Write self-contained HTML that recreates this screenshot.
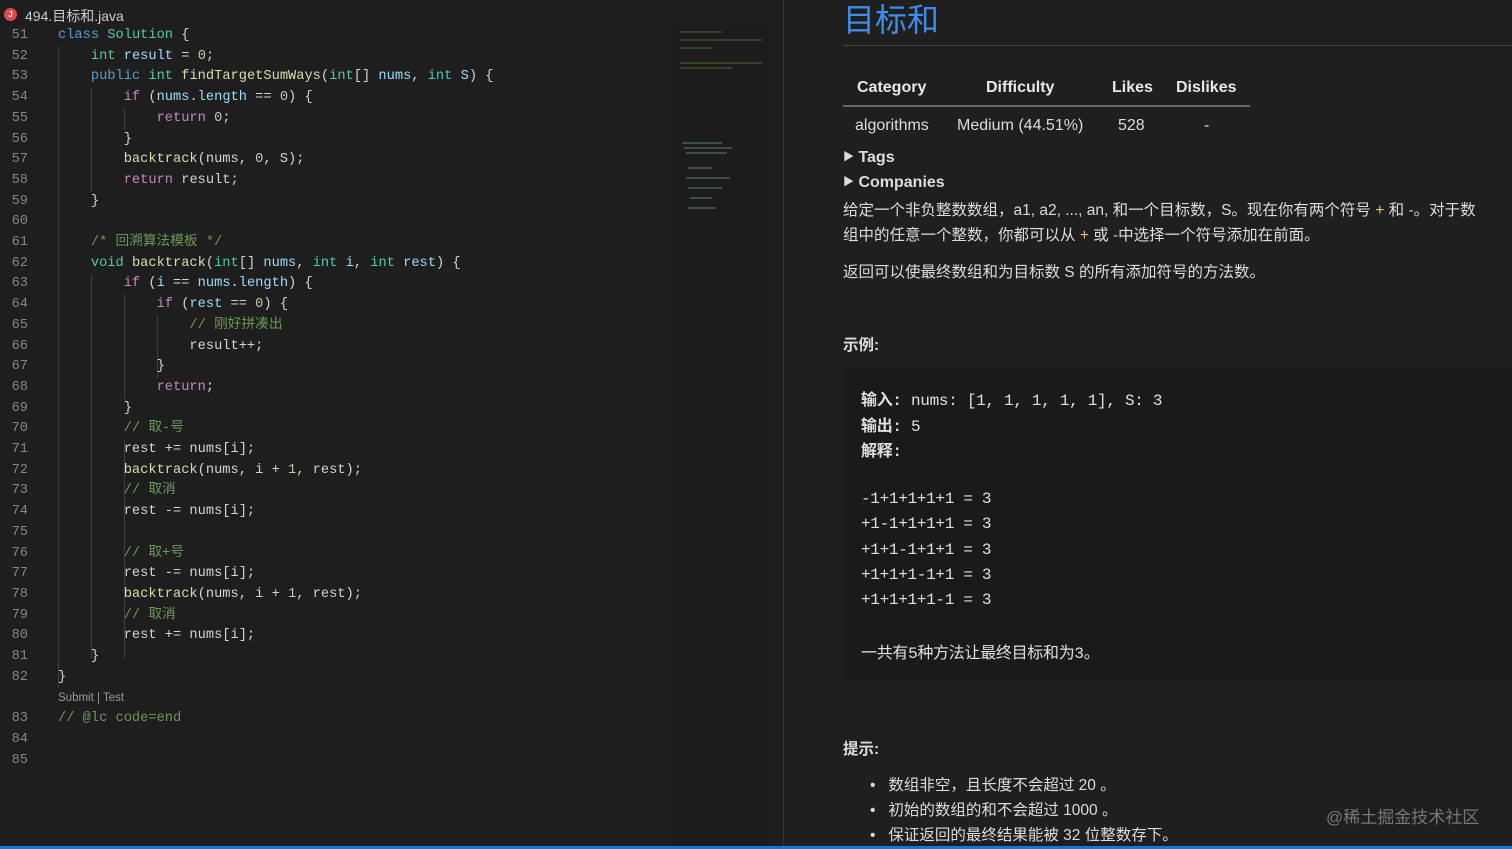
<!DOCTYPE html>
<html><head><meta charset="utf-8"><style>
*{margin:0;padding:0;box-sizing:border-box}
body{width:1512px;height:849px;background:#1e1e1e;overflow:hidden;position:relative;font-family:"Liberation Sans","Noto Sans CJK SC",sans-serif;color:#d4d4d4}
.tab{position:absolute;left:0;top:0;width:672px;height:30px;background:#1e1e1e}
.tab .ic{position:absolute;left:4px;top:8px;width:13px;height:13px;border-radius:50%;background:#e0484d;color:#fff;font-size:8px;text-align:center;line-height:13px;font-weight:bold}
.tab .t{position:absolute;left:25px;top:6px;font-size:14px;color:#ccc}
.code{position:absolute;left:0;top:26px;font-family:"Liberation Mono","Noto Sans CJK SC",monospace;font-size:13.7px}
.ln,.cl{line-height:20px;height:20px}
.ln{position:absolute;left:0;width:28px;text-align:right;color:#858585}
.cl{position:absolute;left:58px;white-space:pre;color:#d4d4d4}
.k{color:#569cd6}.c{color:#4ec9b0}.p{color:#c586c0}.f{color:#dcdcaa}.v{color:#9cdcfe}.n{color:#b5cea8}.m{color:#6a9955}
.guide{position:absolute;width:1px;background:#404040}
.mini{position:absolute;left:672px;top:28px;width:96px;height:821px;background:#1c1c1c}
.div{position:absolute;left:783px;top:0;width:1px;height:849px;background:#333}
.r{position:absolute;left:784px;top:0;right:0;bottom:0;background:#1f1f1f}
.a{position:absolute;white-space:nowrap}
.pre{font-family:"Liberation Mono","Noto Sans CJK SC",monospace;font-size:16px;color:#e0e0e0;letter-spacing:-0.3px}
</style></head><body>
<div class="tab"><div class="ic">J</div><div class="t">494.目标和.java</div></div>
<div class="code">
<div class="guide" style="left:58px;top:20px;height:642px"></div>
<div class="guide" style="left:91px;top:62px;height:104px"></div>
<div class="guide" style="left:91px;top:248px;height:384px"></div>
<div class="guide" style="left:124px;top:83px;height:21px"></div>
<div class="guide" style="left:124px;top:269px;height:104px"></div>
<div class="guide" style="left:157px;top:290px;height:62px"></div>
<div class="guide" style="left:124px;top:414px;height:218px"></div>
</div>
<div class="mini">
<svg width="96" height="200" style="position:absolute;top:0;left:0">
<g stroke="#6a9955" stroke-width="1" opacity=".6">
<line x1="8" y1="4" x2="50" y2="4"/><line x1="8" y1="12" x2="90" y2="12"/><line x1="8" y1="20" x2="40" y2="20"/><line x1="8" y1="35" x2="90" y2="35"/><line x1="8" y1="40" x2="60" y2="40"/>
</g>
<g stroke="#9cdcfe" stroke-width="1" opacity=".5">
<line x1="10" y1="115" x2="50" y2="115"/><line x1="12" y1="120" x2="60" y2="120"/><line x1="14" y1="125" x2="55" y2="125"/><line x1="16" y1="140" x2="40" y2="140"/><line x1="14" y1="150" x2="58" y2="150"/><line x1="16" y1="160" x2="50" y2="160"/><line x1="18" y1="170" x2="40" y2="170"/><line x1="16" y1="180" x2="44" y2="180"/>
</g></svg></div>
<div class="div"></div>
<div class="r">
<div class="a" style="left:59px;top:-5px;font-size:32px;color:#3b8eea">目标和</div>
<div class="a" style="left:59px;top:45px;width:669px;height:1px;background:#444"></div>
<div class="a" style="left:73px;top:79px;font-size:16px;font-weight:bold;color:#e8e8e8">Category</div>
<div class="a" style="left:202px;top:79px;font-size:16px;font-weight:bold;color:#e8e8e8">Difficulty</div>
<div class="a" style="left:328px;top:79px;font-size:16px;font-weight:bold;color:#e8e8e8">Likes</div>
<div class="a" style="left:392px;top:79px;font-size:16px;font-weight:bold;color:#e8e8e8">Dislikes</div>
<div class="a" style="left:59px;top:105px;width:407px;height:2px;background:#666"></div>
<div class="a" style="left:71px;top:117px;font-size:16px;color:#ddd">algorithms</div>
<div class="a" style="left:173px;top:117px;font-size:16px;color:#ddd">Medium (44.51%)</div>
<div class="a" style="left:334px;top:117px;font-size:16px;color:#ddd">528</div>
<div class="a" style="left:420px;top:117px;font-size:16px;color:#ddd">-</div>
<div class="a" style="left:59px;top:148px;font-size:16px;font-weight:bold;color:#ddd"><span style="font-size:11px;vertical-align:2px">▶</span> Tags</div>
<div class="a" style="left:59px;top:173px;font-size:16px;font-weight:bold;color:#ddd"><span style="font-size:11px;vertical-align:2px">▶</span> Companies</div>
<div class="a" style="left:59px;top:198px;font-size:15.5px;color:#ddd">给定一个非负整数数组，a1, a2, ..., an, 和一个目标数，S。现在你有两个符号 <span style="color:#e5c07b">+</span> 和 <span style="color:#e5c07b">-</span>。对于数</div>
<div class="a" style="left:59px;top:223px;font-size:15.5px;color:#ddd">组中的任意一个整数，你都可以从 <span style="color:#e5c07b">+</span> 或 <span style="color:#e5c07b">-</span>中选择一个符号添加在前面。</div>
<div class="a" style="left:59px;top:260px;font-size:15.5px;color:#ddd">返回可以使最终数组和为目标数 S 的所有添加符号的方法数。</div>
<div class="a" style="left:59px;top:333px;font-size:15.5px;font-weight:bold;color:#ddd">示例:</div>
<div class="a" style="left:59px;top:367px;width:669px;height:313px;background:#1a1a1a"></div>
<div class="a pre" style="left:77px;top:386px"><b>输入:</b> nums: [1, 1, 1, 1, 1], S: 3</div>
<div class="a pre" style="left:77px;top:412px"><b>输出:</b> 5</div>
<div class="a pre" style="left:77px;top:437px"><b>解释:</b></div>
<div class="a pre" style="left:77px;top:487px;line-height:25.3px">-1+1+1+1+1 = 3<br>+1-1+1+1+1 = 3<br>+1+1-1+1+1 = 3<br>+1+1+1-1+1 = 3<br>+1+1+1+1-1 = 3</div>
<div class="a pre" style="left:77px;top:639px">一共有5种方法让最终目标和为3。</div>
<div class="a" style="left:59px;top:737px;font-size:15.5px;font-weight:bold;color:#ddd">提示:</div>
<div class="a" style="left:86px;top:773px;font-size:15.5px;color:#ddd;line-height:25px">•&nbsp;&nbsp;&nbsp;数组非空，且长度不会超过 20 。<br>•&nbsp;&nbsp;&nbsp;初始的数组的和不会超过 1000 。<br>•&nbsp;&nbsp;&nbsp;保证返回的最终结果能被 32 位整数存下。</div>
<div class="a" style="left:542px;top:803px;font-size:17px;color:#777">@稀土掘金技术社区</div>
</div>
<div class="a" style="left:0;top:846px;width:1512px;height:3px;background:#0e7ad3"></div>
<div class="code">
<div class="ln" style="top:0">51</div><div class="cl" style="top:0"><span class="k">class</span> <span class="c">Solution</span> {</div>
<div class="ln" style="top:20.7px">52</div><div class="cl" style="top:20.7px">    <span class="c">int</span> <span class="v">result</span> = <span class="n">0</span>;</div>
<div class="ln" style="top:41.4px">53</div><div class="cl" style="top:41.4px">    <span class="k">public</span> <span class="c">int</span> <span class="f">findTargetSumWays</span>(<span class="c">int</span>[] <span class="v">nums</span>, <span class="c">int</span> <span class="v">S</span>) {</div>
<div class="ln" style="top:62.1px">54</div><div class="cl" style="top:62.1px">        <span class="p">if</span> (<span class="v">nums</span>.<span class="v">length</span> == <span class="n">0</span>) {</div>
<div class="ln" style="top:82.8px">55</div><div class="cl" style="top:82.8px">            <span class="p">return</span> <span class="n">0</span>;</div>
<div class="ln" style="top:103.5px">56</div><div class="cl" style="top:103.5px">        }</div>
<div class="ln" style="top:124.2px">57</div><div class="cl" style="top:124.2px">        <span class="f">backtrack</span>(nums, <span class="n">0</span>, S);</div>
<div class="ln" style="top:144.9px">58</div><div class="cl" style="top:144.9px">        <span class="p">return</span> result;</div>
<div class="ln" style="top:165.6px">59</div><div class="cl" style="top:165.6px">    }</div>
<div class="ln" style="top:186.3px">60</div>
<div class="ln" style="top:207px">61</div><div class="cl m" style="top:207px">    /* 回溯算法模板 */</div>
<div class="ln" style="top:227.7px">62</div><div class="cl" style="top:227.7px">    <span class="c">void</span> <span class="f">backtrack</span>(<span class="c">int</span>[] <span class="v">nums</span>, <span class="c">int</span> <span class="v">i</span>, <span class="c">int</span> <span class="v">rest</span>) {</div>
<div class="ln" style="top:248.4px">63</div><div class="cl" style="top:248.4px">        <span class="p">if</span> (<span class="v">i</span> == <span class="v">nums</span>.<span class="v">length</span>) {</div>
<div class="ln" style="top:269.1px">64</div><div class="cl" style="top:269.1px">            <span class="p">if</span> (<span class="v">rest</span> == <span class="n">0</span>) {</div>
<div class="ln" style="top:289.8px">65</div><div class="cl m" style="top:289.8px">                // 刚好拼凑出</div>
<div class="ln" style="top:310.5px">66</div><div class="cl" style="top:310.5px">                result++;</div>
<div class="ln" style="top:331.2px">67</div><div class="cl" style="top:331.2px">            }</div>
<div class="ln" style="top:351.9px">68</div><div class="cl" style="top:351.9px">            <span class="p">return</span>;</div>
<div class="ln" style="top:372.6px">69</div><div class="cl" style="top:372.6px">        }</div>
<div class="ln" style="top:393.3px">70</div><div class="cl m" style="top:393.3px">        // 取-号</div>
<div class="ln" style="top:414px">71</div><div class="cl" style="top:414px">        rest += nums[i];</div>
<div class="ln" style="top:434.7px">72</div><div class="cl" style="top:434.7px">        <span class="f">backtrack</span>(nums, i + <span class="n">1</span>, rest);</div>
<div class="ln" style="top:455.4px">73</div><div class="cl m" style="top:455.4px">        // 取消</div>
<div class="ln" style="top:476.1px">74</div><div class="cl" style="top:476.1px">        rest -= nums[i];</div>
<div class="ln" style="top:496.8px">75</div>
<div class="ln" style="top:517.5px">76</div><div class="cl m" style="top:517.5px">        // 取+号</div>
<div class="ln" style="top:538.2px">77</div><div class="cl" style="top:538.2px">        rest -= nums[i];</div>
<div class="ln" style="top:558.9px">78</div><div class="cl" style="top:558.9px">        <span class="f">backtrack</span>(nums, i + <span class="n">1</span>, rest);</div>
<div class="ln" style="top:579.6px">79</div><div class="cl m" style="top:579.6px">        // 取消</div>
<div class="ln" style="top:600.3px">80</div><div class="cl" style="top:600.3px">        rest += nums[i];</div>
<div class="ln" style="top:621px">81</div><div class="cl" style="top:621px">    }</div>
<div class="ln" style="top:641.7px">82</div><div class="cl" style="top:641.7px">}</div>
<div class="cl" style="top:662px;font-family:'Liberation Sans',sans-serif;font-size:11.5px;color:#999">Submit | Test</div>
<div class="ln" style="top:683px">83</div><div class="cl m" style="top:683px">// @lc code=end</div>
<div class="ln" style="top:704px">84</div>
<div class="ln" style="top:724.5px">85</div>
</div>
</body></html>
